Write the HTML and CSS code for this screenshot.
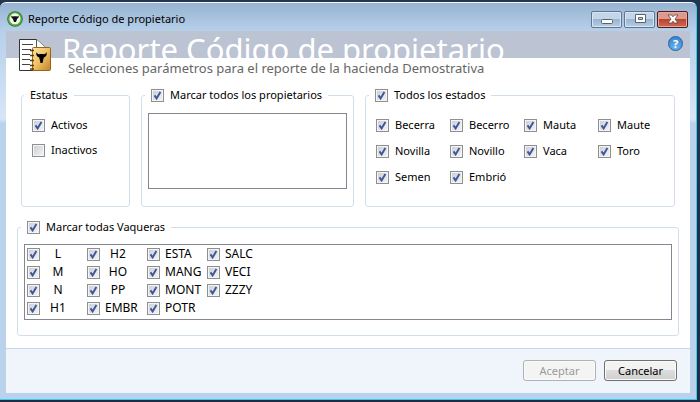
FILE: index.html
```html
<!DOCTYPE html>
<html lang="es">
<head>
  <meta charset="UTF-8">
  <meta name="viewport" content="width=device-width, initial-scale=1.0">
  <title>Reporte Código de propietario</title>
  <link rel="stylesheet" href="styles.css">
</head>
<body>
  <div class="window">
    <div class="title-bar">
      <svg class="app-icon" viewBox="0 0 16 16" width="16" height="16">
        <circle cx="8" cy="8" r="7.8" fill="#2f6e25"/>
        <circle cx="8" cy="8" r="7" fill="#58b23e"/>
        <circle cx="8" cy="7.800" r="5.500" fill="#f4f8f2"/>
        <path d="M4.4 4.6 C5 5.400 6 5.700 6.600 5.300 H9.400 C10 5.700 11 5.400 11.600 4.600 C11.900 6.400 11.400 7.300 10.300 7.600 L9 11 H7 L5.700 7.600 C4.600 7.300 4.100 6.400 4.400 4.600Z" fill="#111"/>
      </svg>
      <span class="title-text">Reporte Código de propietario</span>
      <div class="window-buttons">
        <button type="button" class="win-btn" aria-label="Minimizar">
          <svg viewBox="0 0 12 12" width="12" height="12"><rect x="0.5" y="6.5" width="11" height="4" rx="1" fill="#fff" stroke="#59636f"/></svg>
        </button>
        <button type="button" class="win-btn" aria-label="Maximizar">
          <svg viewBox="0 0 12 12" width="12" height="12"><path d="M1.5 1.5h10v8h-10z M4.5 4.5v2h4v-2z" fill="#fff" fill-rule="evenodd" stroke="#59636f"/></svg>
        </button>
        <button type="button" class="win-btn close" aria-label="Cerrar">
          <svg viewBox="0 0 12 12" width="12" height="12"><path d="M1 2h3.6L6 3.8 7.4 2H11L8 6l3 4H7.4L6 8.2 4.6 10H1l3-4z" fill="#fff" stroke="#5c4646" stroke-width="0.8"/></svg>
        </button>
      </div>
    </div>

    <div class="content">
      <header class="header">
        <svg class="report-icon" viewBox="0 0 32 33" width="32" height="33">
          <path d="M0.5 0.5h17l9 8v23h-26z" fill="#fff" stroke="#333"/>
          <path d="M17.5 0.5v8h9" fill="#fff" stroke="#555"/>
          <path d="M3 5.5h11M3 10.5h9M3 15.5h8M3 20.5h8M3 25.5h8" stroke="#444"/>
          <rect x="13.5" y="8.5" width="18" height="23" rx="1" fill="url(#gold)" stroke="#96651a"/>
          <path d="M11 11.5h4M11 16.5h4M11 21.5h4M11 26.5h4M11 30h4" stroke="#5a3c0a" stroke-width="1.6"/>
          <path d="M17.5 13c.6 1.800 2 2.600 3.200 2h3.600c1.200.6 2.600-.2 3.200-2 .8 3-.6 5-2.700 5.400l-1.300 5.600h-2l-1.300-5.600c-2.100-.4-3.500-2.400-2.700-5.400z" fill="#000"/>
          <defs>
            <linearGradient id="gold" x1="0" y1="0" x2="1" y2="1">
              <stop offset="0" stop-color="#ffe7a8"/>
              <stop offset="0.5" stop-color="#eebf62"/>
              <stop offset="1" stop-color="#bd8428"/>
            </linearGradient>
          </defs>
        </svg>
        <div class="banner">
          <h1>Reporte Código de propietario</h1>
          <button type="button" class="help" aria-label="Ayuda">?</button>
        </div>
        <p class="subtitle">Selecciones parámetros para el reporte de la hacienda Demostrativa</p>
      </header>

      <main>
        <div class="groups">
          <fieldset class="estatus">
            <legend>Estatus</legend>
            <label><input type="checkbox" checked>Activos</label>
            <label><input type="checkbox">Inactivos</label>
          </fieldset>

          <fieldset class="propietarios">
            <legend><label><input type="checkbox" checked>Marcar todos los propietarios</label></legend>
            <div class="list"></div>
          </fieldset>

          <fieldset>
            <legend><label><input type="checkbox" checked>Todos los estados</label></legend>
            <div class="estados">
              <label><input type="checkbox" checked>Becerra</label>
              <label><input type="checkbox" checked>Becerro</label>
              <label><input type="checkbox" checked>Mauta</label>
              <label><input type="checkbox" checked>Maute</label>
              <label><input type="checkbox" checked>Novilla</label>
              <label><input type="checkbox" checked>Novillo</label>
              <label><input type="checkbox" checked>Vaca</label>
              <label><input type="checkbox" checked>Toro</label>
              <label><input type="checkbox" checked>Semen</label>
              <label><input type="checkbox" checked>Embrió</label>
            </div>
          </fieldset>
        </div>

        <fieldset class="vaqueras">
          <legend><label><input type="checkbox" checked>Marcar todas Vaqueras</label></legend>
          <div class="list codes">
            <label><input type="checkbox" checked><span>L</span></label>
            <label><input type="checkbox" checked><span>M</span></label>
            <label><input type="checkbox" checked><span>N</span></label>
            <label><input type="checkbox" checked><span>H1</span></label>
            <label><input type="checkbox" checked><span>H2</span></label>
            <label><input type="checkbox" checked><span>HO</span></label>
            <label><input type="checkbox" checked><span>PP</span></label>
            <label><input type="checkbox" checked><span>EMBR</span></label>
            <label><input type="checkbox" checked>ESTA</label>
            <label><input type="checkbox" checked>MANG</label>
            <label><input type="checkbox" checked>MONT</label>
            <label><input type="checkbox" checked>POTR</label>
            <label><input type="checkbox" checked>SALC</label>
            <label><input type="checkbox" checked>VECI</label>
            <label><input type="checkbox" checked>ZZZY</label>
          </div>
        </fieldset>
      </main>

      <footer>
        <button type="button" class="btn" disabled>Aceptar</button>
        <button type="button" class="btn">Cancelar</button>
      </footer>
    </div>
  </div>
</body>
</html>
```

FILE: styles.css
```css
:root {
  --frame: #bad2eb;
  --group-border: #d3dfe8;
  --list-border: #828790;
}

* {
  box-sizing: border-box;
}

body {
  margin: 0;
  padding: 2px 3px 2px 0;
  min-height: 100vh;
  display: flex;
  background: linear-gradient(#22374f, #1c2d45);
  font: 11px/16px "Noto Sans", "Open Sans", sans-serif;
  color: #000;
}

.window {
  flex: 1;
  display: flex;
  flex-direction: column;
  padding: 0 6px 6px;
  border-top: 1px solid #f2f7fc;
  border-right: 1px solid #35cdec;
  border-bottom: 1px solid #35cdec;
  border-radius: 6px 6px 0 0;
  background: linear-gradient(#97b3d1 0, #b7d0ea 28px, #d7e6f7 116px, var(--frame) 120px);
}

.title-bar {
  display: flex;
  align-items: center;
  gap: 5px;
  height: 28px;
  padding: 4px 2px 0 1px;
}

.title-text {
  flex: 1;
}

.window-buttons {
  display: flex;
  gap: 2px;
}

.win-btn {
  display: flex;
  align-items: center;
  justify-content: center;
  width: 31px;
  height: 17px;
  padding: 0;
  border: 1px solid #5f7590;
  border-radius: 2px;
  background: linear-gradient(#c3d5e8 45%, #9bb4cf 50%, #b5cde5);
  box-shadow: inset 0 0 0 1px #d8e6f4;
}

.win-btn.close {
  border-color: #4c1c22;
  background: linear-gradient(#dc9a8c 45%, #bd4331 50%, #cf6a50);
  box-shadow: inset 0 0 0 1px #e5a99d;
}

.content {
  flex: 1;
  display: flex;
  flex-direction: column;
  background: #fff;
}

.header {
  position: relative;
}

.report-icon {
  position: absolute;
  left: 13px;
  top: 8px;
}

.banner {
  display: flex;
  justify-content: space-between;
  height: 27px;
  padding: 0 7px 0 56px;
  overflow: hidden;
  background: #bcc4d3;
}

h1 {
  margin: 0;
  font-size: 31px;
  line-height: 36px;
  font-weight: 400;
  color: #fff;
  white-space: nowrap;
}

.help {
  width: 15px;
  height: 15px;
  margin-top: 5px;
  padding: 0;
  border: 1px solid #2560a8;
  border-radius: 50%;
  background: radial-gradient(circle at 50% 80%, #6cb8ee, #2f78c8);
  color: #fff;
  font: bold 11px/12px "Noto Sans", sans-serif;
}

.subtitle {
  margin: 0;
  padding: 0 0 1px 62px;
  font-size: 13px;
  line-height: 20px;
  color: #666;
}

main {
  flex: 1;
  padding: 8px 11px 12px;
}

.groups {
  display: grid;
  grid-template-columns: 109fr 213fr 310fr;
  gap: 11px;
  padding: 0 4px;
}

fieldset {
  min-width: 0;
  margin: 0;
  padding: 0 6px 7px;
  border: 1px solid var(--group-border);
  border-radius: 3px;
}

legend {
  margin-left: -3px;
  padding: 0 6px;
}

label {
  display: flex;
  align-items: center;
  gap: 6px;
  white-space: nowrap;
}

input[type="checkbox"] {
  appearance: none;
  flex: none;
  width: 13px;
  height: 13px;
  margin: 0;
  border: 1px solid #8e8f8f;
  background: linear-gradient(135deg, #c8ccd2, #f6f6f6);
  box-shadow: inset 0 0 0 1px #f4f4f4;
}

input[type="checkbox"]:checked {
  background-image: url("data:image/svg+xml,%3Csvg xmlns='http://www.w3.org/2000/svg' viewBox='0 0 11 11'%3E%3Cpath d='M2.5 5.4 L4.6 8.4 L8.4 2' fill='none' stroke='%233f559c' stroke-width='1.9'/%3E%3C/svg%3E"), linear-gradient(135deg, #c8ccd2, #f6f6f6);
}

.estatus {
  min-height: 120px;
  padding: 0 10px;
}

.estatus legend {
  margin-left: -8px;
}

.estatus label {
  margin-top: 9px;
}

.estatus legend + label {
  margin-top: 14px;
}

.list {
  min-height: 76px;
  border: 1px solid var(--list-border);
}

.propietarios .list {
  margin-top: 10px;
}

.estados {
  display: grid;
  grid-template-columns: repeat(4, 74px);
  gap: 10px 0;
  padding: 14px 4px 0;
}

.vaqueras {
  margin-top: 12px;
  padding-bottom: 15px;
}

.vaqueras .list {
  margin-top: 9px;
}

.codes {
  display: grid;
  grid-auto-flow: column;
  grid-template-rows: repeat(4, 18px);
  grid-auto-columns: 60px;
  padding: 0 2px 2px;
  font-size: 12px;
}

.codes label {
  gap: 5px;
}

.codes span {
  width: 26px;
  text-align: center;
}

footer {
  display: flex;
  justify-content: flex-end;
  gap: 8px;
  padding: 11px 13px 12px;
  border-top: 1px solid #ccd6e8;
  background: #f0f4fb;
}

.btn {
  width: 73px;
  height: 21px;
  padding: 0;
  border: 1px solid #707070;
  border-radius: 3px;
  background: linear-gradient(#f2f2f2 45%, #dddddd 50%, #cfcfcf);
  box-shadow: inset 0 0 0 1px #fafafa;
  font: inherit;
  color: #000;
}

.btn:disabled {
  border-color: #adb2b5;
  background: #f4f4f4;
  color: #9a9a9a;
}
```
